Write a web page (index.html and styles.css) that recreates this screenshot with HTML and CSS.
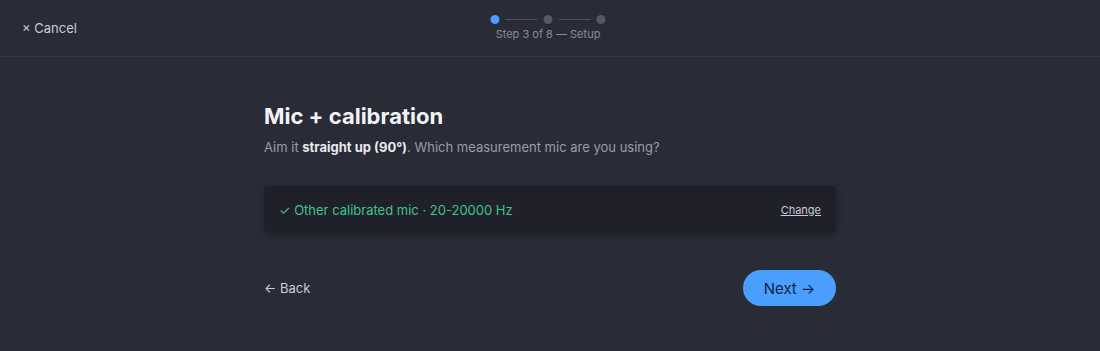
FILE: index.html
```html
<!DOCTYPE html>
<html lang="en">
<head>
    <meta charset="UTF-8">
    <meta name="viewport" content="width=device-width, initial-scale=1.0">
    <title>Setup — Mic + calibration</title>
    <link rel="stylesheet" href="styles.css">
</head>
<body>
<header class="topbar">
    <a class="cancel" href="#">× Cancel</a>
    <div class="progress">
        <div class="steps">
            <span class="dot active"></span>
            <span class="line"></span>
            <span class="dot"></span>
            <span class="line"></span>
            <span class="dot"></span>
        </div>
        <div class="step-label">Step 3 of 8 — Setup</div>
    </div>
</header>

<main class="wizard">
    <h1>Mic + calibration</h1>
    <p class="lead">Aim it <strong>straight up (90°)</strong>. Which measurement mic are you using?</p>

    <div class="mic-card">
        <span class="mic-name">✓ Other calibrated mic · 20-20000 Hz</span>
        <a class="change" href="#">Change</a>
    </div>

    <div class="actions">
        <button class="back">← Back</button>
        <button class="next">Next →</button>
    </div>
</main>
</body>
</html>
```

FILE: styles.css
```css
body {
    margin: 0;
    height: 351px;
    overflow: hidden;
    background-color: #292b36;
    color: #e6e7ec;
    font-family: Inter, "Noto Sans", sans-serif;
}

.topbar {
    position: relative;
    height: 56px;
    border-bottom: 1px solid #33353f;
    display: flex;
    align-items: center;
    padding: 0 22px;
}

.cancel {
    color: #c9cbd3;
    text-decoration: none;
    font-size: 13px;
}

.progress {
    position: absolute;
    left: 50%;
    top: 15px;
    transform: translateX(-50%);
    margin-left: -2px;
    display: flex;
    flex-direction: column;
    align-items: center;
}

.steps {
    display: flex;
    align-items: center;
    gap: 6px;
}

.dot {
    width: 9px;
    height: 9px;
    border-radius: 50%;
    background-color: #555865;
}

.dot.active {
    background-color: #4a9eff;
}

.line {
    width: 32px;
    height: 1px;
    background-color: #4a4d5a;
}

.steps .line:first-of-type {
    background-color: #3d5a80;
}

.step-label {
    margin-top: 3px;
    font-size: 11px;
    color: #8a8d99;
}

.wizard {
    width: 572px;
    margin: 0 auto;
    padding-top: 44px;
}

h1 {
    margin: 0;
    font-size: 22px;
    font-weight: 700;
    color: #f2f3f6;
    line-height: 30px;
}

.lead {
    margin: 6px 0 0;
    font-size: 13px;
    color: #9a9dab;
    line-height: 20px;
}

.lead strong {
    color: #e8e9ee;
    font-weight: 700;
}

.mic-card {
    margin-top: 29px;
    height: 47px;
    display: flex;
    align-items: center;
    justify-content: space-between;
    padding: 0 15px;
    background-color: #1f2029;
    border-radius: 4px;
    box-shadow: 0 2px 8px rgba(0, 0, 0, 0.25);
}

.mic-name {
    font-size: 13px;
    color: #3ec48f;
}

.change {
    font-size: 11px;
    color: #c9cbd3;
    text-decoration: underline;
}

.actions {
    margin-top: 37px;
    display: flex;
    align-items: center;
    justify-content: space-between;
}

.back {
    background: none;
    border: none;
    padding: 0;
    color: #c9cbd3;
    font-family: inherit;
    font-size: 13px;
}

.next {
    width: 93px;
    height: 36px;
    border: none;
    border-radius: 18px;
    background-color: #4a9eff;
    color: #12233d;
    font-family: inherit;
    font-size: 15px;
    font-weight: 400;
}
```
